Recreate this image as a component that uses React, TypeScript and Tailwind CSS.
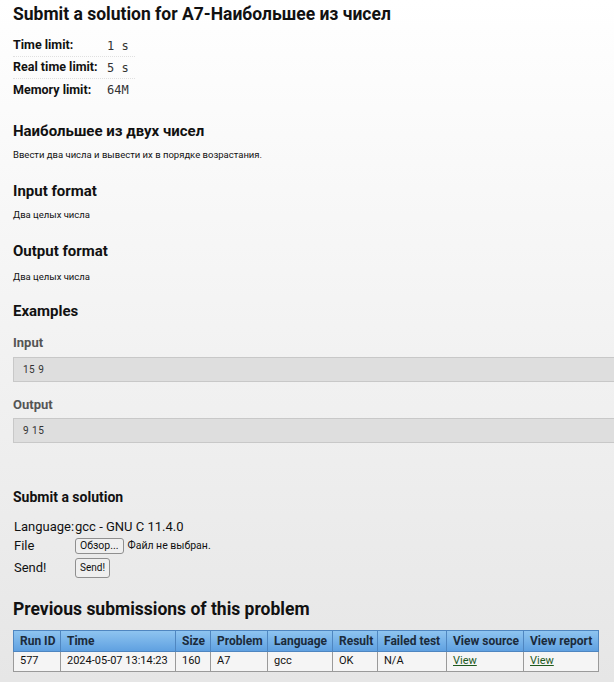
import React from "react";

const cols = [
  { h: "Run ID", v: "577", w: 47 },
  { h: "Time", v: "2024-05-07 13:14:23", w: 115 },
  { h: "Size", v: "160", w: 35 },
  { h: "Problem", v: "A7", w: 57 },
  { h: "Language", v: "gcc", w: 65 },
  { h: "Result", v: "OK", w: 45 },
  { h: "Failed test", v: "N/A", w: 69 },
  { h: "View source", v: "View", w: 77, link: true },
  { h: "View report", v: "View", w: 75, link: true },
];

export default function App() {
  return (
    <div
      className="w-[614px] h-[682px] overflow-hidden bg-gradient-to-b from-white to-[#e6e6e6] text-[#111]"
      style={{ fontFamily: "Roboto, 'Liberation Sans', sans-serif" }}
    >
      <div className="pl-[13px] pt-[2px]">
        <h1 className="text-[17.5px] font-bold leading-[22px] mt-[1px]">
          Submit a solution for A7-Наибольшее из чисел
        </h1>

        <div className="mt-[10px] w-[122px]">
          {[
            ["Time limit:", "1 s"],
            ["Real time limit:", "5 s"],
            ["Memory limit:", "64M"],
          ].map(([l, v], i) => (
            <div
              key={l}
              className={`flex items-center h-[22px] ${i < 2 ? "border-b border-dotted border-[#e0e0e0]" : ""}`}
            >
              <span className="w-[94px] text-[12.5px] font-bold whitespace-nowrap">{l}</span>
              <span
                className="text-[12px] text-[#333]"
                style={{ fontFamily: "'DejaVu Sans Mono', monospace" }}
              >
                {v}
              </span>
            </div>
          ))}
        </div>

        <h2 className="mt-[21px] text-[15px] font-bold leading-[18px]">Наибольшее из двух чисел</h2>
        <p className="mt-[9px] text-[9.5px] leading-[12px]">
          Ввести два числа и вывести их в порядке возрастания.
        </p>

        <h2 className="mt-[21px] text-[15px] font-bold leading-[18px]">Input format</h2>
        <p className="mt-[9px] text-[9.5px] leading-[12px]">Два целых числа</p>

        <h2 className="mt-[21px] text-[15px] font-bold leading-[18px]">Output format</h2>
        <p className="mt-[11px] text-[9.5px] leading-[12px]">Два целых числа</p>

        <h2 className="mt-[19px] text-[15px] font-bold leading-[18px]">Examples</h2>

        <h3 className="mt-[15px] text-[13px] font-bold text-[#555] leading-[16px]">Input</h3>
        <div className="mt-[6px] w-[640px] h-[25px] bg-[#dedede] border border-[#c8c8c8] flex items-center pl-[9px] text-[10px] text-[#333] tracking-[0.5px]">
          15 9
        </div>

        <h3 className="mt-[15px] text-[13px] font-bold text-[#555] leading-[16px]">Output</h3>
        <div className="mt-[5px] w-[640px] h-[25px] bg-[#dedede] border border-[#c8c8c8] flex items-center pl-[9px] text-[10px] text-[#333] tracking-[0.5px]">
          9 15
        </div>

        <h2 className="mt-[45px] text-[14px] font-bold leading-[18px]">Submit a solution</h2>

        <div className="mt-[12px] pl-[1px] text-[13px] leading-[16px]">
          <div className="flex items-center h-[17px]">
            <span className="w-[61px]">Language:</span>
            <span>gcc - GNU C 11.4.0</span>
          </div>
          <div className="flex items-center h-[22px]">
            <span className="w-[61px]">File</span>
            <span className="border border-[#8f8f8f] rounded-[3px] bg-[#efefef] text-[10.5px] leading-[12px] px-[4px] py-[1px]">
              Обзор...
            </span>
            <span className="ml-[4px] text-[10.5px]">Файл не выбран.</span>
          </div>
          <div className="flex items-center h-[22px]">
            <span className="w-[61px]">Send!</span>
            <span className="border border-[#8f8f8f] rounded-[3px] bg-[#efefef] text-[10px] leading-[12px] px-[4px] py-[3px]">
              Send!
            </span>
          </div>
        </div>

        <h2 className="mt-[19px] text-[17.5px] font-bold leading-[22px]">
          Previous submissions of this problem
        </h2>

        <table className="mt-[10px] border-collapse table-fixed w-[585px] text-[11px]">
          <colgroup>
            {cols.map((c) => (
              <col key={c.h} style={{ width: c.w }} />
            ))}
          </colgroup>
          <thead>
            <tr className="bg-gradient-to-b from-[#8ec4f0] to-[#5d9fe0]">
              {cols.map((c) => (
                <th
                  key={c.h}
                  className="border border-[#4f86c0] h-[21px] pl-[6px] pr-0 text-left text-[12px] font-bold text-[#1b2b3b] whitespace-nowrap overflow-hidden"
                >
                  {c.h}
                </th>
              ))}
            </tr>
          </thead>
          <tbody>
            <tr className="bg-[#f5f5f5]">
              {cols.map((c, i) => (
                <td
                  key={i}
                  className="border border-[#9a9a9a] h-[20px] pl-[6px] pr-0 whitespace-nowrap"
                >
                  {c.link ? (
                    <span className="underline text-[#1e5a1e]">{c.v}</span>
                  ) : (
                    c.v
                  )}
                </td>
              ))}
            </tr>
          </tbody>
        </table>
      </div>
    </div>
  );
}
